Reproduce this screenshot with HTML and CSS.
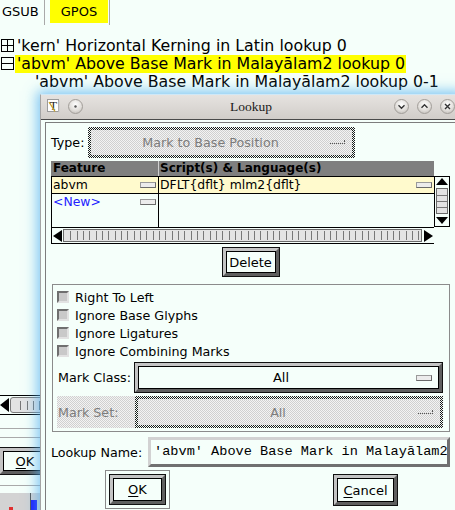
FILE: index.html
```html
<!DOCTYPE html>
<html>
<head>
<meta charset="utf-8">
<link rel="stylesheet" href="styles.css">
</head>
<body>
<div class="app">
  <div class="tabs">
    <div class="tab tab-first">GSUB</div>
    <div class="tab tab-sel"><span class="tab-hl">GPOS</span></div>
  </div>
  <div class="tree">
    <div class="trow"><span class="tog"><i class="h"></i><i class="v"></i></span><span class="tlabel">'kern' Horizontal Kerning in Latin lookup 0</span></div>
    <div class="trow"><span class="tog"><i class="h"></i></span><span class="tlabel hl">'abvm' Above Base Mark in Malayālam2 lookup 0</span></div>
    <div class="trow sub"><span class="tlabel">'abvm' Above Base Mark in Malayālam2 lookup 0-1</span></div>
  </div>
  <div class="lower">
    <div class="bg-scroll"><span class="bg-arrow"></span><span class="bg-track"></span></div>
    <div class="bg-line l1"></div>
    <div class="bg-line l2"></div>
    <div class="bg-okrow"><span class="btn bg-ok"><u>O</u>K</span></div>
    <div class="bg-line l3"></div>
    <div class="bg-band"><i class="red"></i><i class="vl"></i><i class="blue"></i></div>
  </div>
</div>

<div class="dlg">
  <div class="titlebar">
    <div class="tb-left">
      <svg class="appicon" width="13" height="14" viewBox="0 0 13 14"><rect x="0.5" y="0.5" width="11" height="12" fill="#fff" stroke="#9a9a9a"/><line x1="12" y1="13.5" x2="12" y2="1.5" stroke="#c8c8c8"/><text x="6.5" y="10.5" font-family="Liberation Serif, serif" font-size="12" text-anchor="middle" fill="#222">T</text><line x1="2" y1="3" x2="8" y2="12.5" stroke="#c9a227" stroke-width="1.3"/></svg>
      <span class="circ"><svg width="9" height="9" viewBox="0 0 9 9"><circle cx="4.5" cy="4.5" r="1.2" fill="#555"/></svg></span>
    </div>
    <div class="tb-title">Lookup</div>
    <div class="tb-right">
      <span class="circ"><svg width="9" height="9" viewBox="0 0 9 9"><path d="M1.5 3.2l3 3 3-3" fill="none" stroke="#333" stroke-width="1.4"/></svg></span>
      <span class="circ"><svg width="9" height="9" viewBox="0 0 9 9"><path d="M1.5 5.8l3-3 3 3" fill="none" stroke="#333" stroke-width="1.4"/></svg></span>
      <span class="circ"><svg width="9" height="9" viewBox="0 0 9 9"><path d="M2 2l5 5M7 2l-5 5" fill="none" stroke="#333" stroke-width="1.4"/></svg></span>
    </div>
  </div>

  <div class="frame">
    <div class="typerow">
      <span class="lbl type-lbl">Type:</span>
      <div class="dis type-btn"><div class="dis-in"><span class="dis-text">Mark to Base Position</span><i class="dmenu"></i></div></div>
    </div>

    <div class="tbl">
      <div class="thead"><span class="h1">Feature</span><span class="h2">Script(s) &amp; Language(s)</span></div>
      <div class="tbody">
        <div class="trw r1"><span class="c1">abvm<i class="mb"></i></span><span class="c2">DFLT{dflt} mlm2{dflt}<i class="mb"></i></span></div>
        <div class="trw r2"><span class="c1 new">&lt;New&gt;<i class="mb"></i></span><span class="c2"></span></div>
        <div class="trw rfill"><span class="c1"></span><span class="c2"></span></div>
      </div>
      <div class="vscroll">
        <span class="ar-up"></span>
        <span class="vthumb"><i></i><i></i><i></i></span>
        <span class="ar-dn"></span>
      </div>
      <div class="hscroll">
        <span class="ar-l"></span>
        <span class="htrack"></span>
        <span class="ar-r"></span>
      </div>
    </div>

    <div class="del-row"><span class="btn del">Delete</span></div>

    <div class="group">
      <div class="chk"><span class="cb"></span><span class="lbl">Right To Left</span></div>
      <div class="chk"><span class="cb"></span><span class="lbl">Ignore Base Glyphs</span></div>
      <div class="chk"><span class="cb"></span><span class="lbl">Ignore Ligatures</span></div>
      <div class="chk"><span class="cb"></span><span class="lbl">Ignore Combining Marks</span></div>
      <div class="mc-row">
        <span class="lbl mc-lbl">Mark Class:</span>
        <span class="btn mc-btn"><span class="btn-text">All</span><i class="mb"></i></span>
      </div>
      <div class="ms-row">
        <span class="lbl ms-lbl">Mark Set:</span>
        <div class="dis ms-btn"><div class="dis-in"><span class="dis-text">All</span><i class="dmenu"></i></div></div>
      </div>
    </div>

    <div class="name-row">
      <span class="lbl name-lbl">Lookup Name:</span>
      <div class="field">'abvm' Above Base Mark in Malayālam2</div>
    </div>

    <div class="btn-row">
      <div class="defring"><span class="btn okb"><u>O</u>K</span></div>
      <span class="btn cancel"><u>C</u>ancel</span>
    </div>
  </div>
</div>
</body>
</html>
```

FILE: styles.css
```css
* { box-sizing: border-box; }
html, body { margin: 0; padding: 0; }
body {
  width: 455px;
  height: 510px;
  overflow: hidden;
  position: relative;
  background: #f5fffa;
  font-family: "DejaVu Sans", "Noto Sans", sans-serif;
  color: #000;
}
i { display: block; font-style: normal; }

/* ---------- background window ---------- */
.tabs { display: flex; height: 25px; font-size: 13px; line-height: 24px; }
.tab { border-right: 1px solid #a9a9a9; }
.tab-first { width: 45px; padding-left: 2px; }
.tab-sel { width: 65px; padding-left: 5px; }
.tab-hl { display: block; width: 58px; height: 23px; background: #ffff00; text-align: center; }

.tree { margin-top: 12px; font-size: 15.8px; line-height: 18px; }
.trow { display: flex; align-items: flex-start; height: 18px; white-space: nowrap; }
.tog {
  display: grid; place-items: center;
  width: 13px; height: 13px; margin: 2px 0 0 1px;
  border: 1px solid #000;
}
.tog .h { grid-area: 1 / 1; width: 100%; height: 1px; background: #000; }
.tog .v { grid-area: 1 / 1; width: 1px; height: 100%; background: #000; }
.tlabel { margin-left: 1px; padding: 0 1px 0 2px; }
.tlabel.hl { background: #ffff00; }
.trow.sub { padding-left: 32px; }

.lower { margin-top: 304px; }
.bg-scroll {
  height: 20px; display: flex; align-items: center;
  border-top: 1px solid #000; border-bottom: 1px solid #000;
}
.bg-arrow {
  width: 0; height: 0;
  border-top: 7px solid transparent; border-bottom: 7px solid transparent;
  border-right: 9px solid #000;
}
.bg-track {
  margin-left: 1px; width: 400px; height: 16px;
  border: 1px solid #7a7a7a; border-radius: 3px 0 0 3px;
  background: repeating-linear-gradient(90deg, transparent 0 5.33px, #777 5.33px 6.33px) 4px 3px / 100% 9px no-repeat, #e3e3e3;
}
.bg-line { height: 1px; background: #a9a9a9; }
.l1 { margin-top: 13px; }
.l2 { margin-top: 8px; }
.bg-okrow { margin-top: 10px; height: 26px; display: flex; }
.bg-ok { width: 50px; height: 26px; margin-left: 0; }
.l3 { margin-top: 11px; }
.bg-band { margin-top: 7px; height: 17px; background: #d3d3d3; display: flex; align-items: flex-end; }
.bg-band .red { width: 4px; height: 3px; background: #e03030; margin-left: 9px; }
.bg-band .vl { width: 1px; height: 17px; background: #555; margin-left: 17px; }
.bg-band .blue { width: 6px; height: 10px; background: #1a1aff; margin-left: 0; }

/* ---------- buttons ---------- */
.btn {
  display: flex; align-items: center; justify-content: center;
  border: 3px solid;
  border-color: #c4c4c4 #5f5f5f #5f5f5f #c4c4c4;
  box-shadow: 0 0 0 1px #111, inset 0 0 0 1px #000;
  background: #f5fffa;
  font-size: 13px;
  white-space: nowrap;
}
.btn u { text-decoration: underline; text-underline-offset: 2px; }
.mb {
  width: 16px; height: 6px;
  border: 1px solid; border-color: #9a9a9a #6a6a6a #6a6a6a #9a9a9a;
  background: #ececec;
}

/* ---------- dialog ---------- */
.dlg {
  position: absolute; left: 40px; top: 94px;
  width: 421px; height: 430px;
  background: #f5fffa;
  border-left: 1px solid #a4a4a4;
  border-top: 1px solid #cfe8f7;
  box-shadow: 0 0 12px 3px rgba(80, 175, 240, 0.72);
}
.titlebar {
  height: 25px; padding-bottom: 2px;
  display: grid; grid-template-columns: 1fr auto 1fr; align-items: center;
  background: linear-gradient(#e6e3e0, #d1cdc9);
  border-bottom: 1px solid #4a4a4a;
}
.tb-left { display: flex; align-items: center; padding-left: 6px; }
.appicon { display: block; }
.tb-left .circ { margin-left: 8px; }
.tb-title { font-family: "Liberation Serif", serif; font-size: 13.5px; color: #1a1a1a; padding-top: 1px; }
.tb-right { display: flex; justify-content: flex-end; gap: 8px; padding-right: 6px; }
.circ {
  width: 15px; height: 15px; border-radius: 50%;
  display: grid; place-items: center;
  border: 1px solid #a29e99;
  background: radial-gradient(circle at 50% 35%, #ffffff 0, #e2dfdb 55%, #b9b5b0 100%);
}
.circ svg { display: block; }

.frame {
  margin: 2px 0 0 4px;
  border: 1px solid #7d7d7d;
  padding: 4px 0 0 5px;
  height: 410px;
}
.lbl { font-size: 12.7px; white-space: nowrap; }

.typerow { display: flex; align-items: center; height: 31px; }
.type-lbl { width: 37px; }
.type-btn { width: 267px; height: 31px; }

.dis {
  padding: 3px;
  background: repeating-conic-gradient(#1a1a1a 0 25%, #f5fffa 0 50%) 0 0 / 2px 2px;
}
.dis-in {
  height: 100%; display: flex; align-items: center;
  background: repeating-conic-gradient(#d0d0d0 0 25%, #f3f3f3 0 50%) 0 0 / 2px 2px;
  color: #7c7c7c; font-size: 12.7px;
}
.dis-text { flex: 1; text-align: center; }
.dmenu {
  width: 15px; height: 4px; margin-right: 7px; margin-bottom: 1px;
  border-bottom: 1px dotted #555; border-right: 1px dotted #555;
}

/* table */
.tbl {
  margin-top: 3px; width: 399px;
  display: grid; grid-template-columns: 383px 16px; grid-template-rows: 16px 50px 17px;
}
.thead {
  grid-column: 1; grid-row: 1;
  display: flex; background: #7f7f7f; border-bottom: 1px solid #000;
  font-weight: bold; font-size: 12px; line-height: 15px; white-space: nowrap;
}
.h1 { width: 108px; padding-left: 2px; border-right: 1px solid #cfcfcf; }
.h2 { padding-left: 1px; }
.tbody {
  grid-column: 1; grid-row: 2;
  display: flex; flex-direction: column;
  border-left: 1px solid #000;
  font-size: 12.4px; line-height: 16px;
}
.trw { display: flex; height: 16px; }
.trw.r1 { height: 17px; background: #fffacd; border-bottom: 1px solid #000; }
.trw.rfill { flex: 1; }
.c1 {
  width: 107px; border-right: 1px solid #000; padding-left: 1px;
  display: flex; align-items: center; justify-content: space-between; padding-right: 2px;
}
.c2 {
  flex: 1; padding-left: 1px; padding-right: 2px;
  display: flex; align-items: center; justify-content: space-between; white-space: nowrap;
}
.c1.new { color: #2222ff; }
.vscroll {
  grid-column: 2; grid-row: 2;
  margin-top: -1px; height: 51px;
  border: 1px solid #000;
  display: flex; flex-direction: column; align-items: center;
  padding-top: 1px;
}
.ar-up { width: 0; height: 0; border-left: 6px solid transparent; border-right: 6px solid transparent; border-bottom: 7px solid #000; }
.ar-dn { width: 0; height: 0; border-left: 6px solid transparent; border-right: 6px solid transparent; border-top: 7px solid #000; margin-top: 3px; }
.vthumb {
  margin-top: 3px; width: 12px; height: 26px;
  border: 1px solid #6a6a6a; background: #e3e3e3;
  display: flex; flex-direction: column; align-items: center; justify-content: center; gap: 5px;
}
.vthumb i { width: 10px; height: 1px; background: #777; }
.hscroll {
  grid-column: 1; grid-row: 3;
  display: flex; align-items: center;
  border-top: 1px solid #000; border-bottom: 1px solid #000; border-left: 1px solid #000;
}
.ar-l { margin-left: 1px; width: 0; height: 0; border-top: 6px solid transparent; border-bottom: 6px solid transparent; border-right: 9px solid #000; }
.ar-r { margin-left: 2px; width: 0; height: 0; border-top: 6px solid transparent; border-bottom: 6px solid transparent; border-left: 9px solid #000; }
.htrack {
  margin-left: 1px; width: 359px; height: 13px;
  border: 1px solid #6a6a6a;
  background: repeating-linear-gradient(90deg, transparent 0 5.33px, #777 5.33px 6.33px) 1px 1px / 100% 9px no-repeat, #e3e3e3;
}

.del-row { margin-top: 4px; width: 399px; display: flex; justify-content: center; }
.del { width: 56px; height: 28px; }

/* group */
.group {
  margin: 8px 0 0 1px; width: 398px;
  border: 1px solid #8b8b8b;
  padding: 3px 0 3px 4px;
}
.chk { display: flex; align-items: center; height: 18px; }
.cb {
  width: 12px; height: 12px; margin-right: 6px;
  border: 2px solid; border-color: #6f6f6f #e2e2e2 #e2e2e2 #6f6f6f;
  background: #c9c9c9;
}
.mc-row { margin-top: 2px; height: 31px; display: flex; align-items: center; }
.mc-lbl { width: 78px; padding-left: 1px; }
.mc-btn { width: 307px; height: 29px; }
.btn-text { flex: 1; text-align: center; padding-left: 8px; }
.mc-btn .mb { margin-right: 7px; }
.ms-row { margin-top: 3px; height: 32px; display: flex; }
.ms-lbl {
  width: 78px; padding-left: 1px; display: flex; align-items: center; color: #7c7c7c;
  background: repeating-conic-gradient(#d0d0d0 0 25%, #f3f3f3 0 50%) 0 0 / 2px 2px;
}
.ms-btn { width: 308px; height: 32px; }

/* name */
.name-row { margin-top: 5px; height: 30px; display: flex; align-items: center; }
.name-lbl { width: 97px; }
.field {
  width: 302px; height: 30px;
  border: 3px solid; border-color: #d2d2d2 #707070 #707070 #d2d2d2;
  padding-left: 3px;
  font-family: "Liberation Mono", monospace; font-size: 13.6px; line-height: 24px;
  white-space: nowrap; overflow: hidden;
}

/* ok / cancel */
.btn-row { margin-top: 3px; display: flex; align-items: flex-start; }
.defring {
  margin-left: 54px; width: 65px; height: 39px;
  border: 1px solid #8a8a8a; padding: 4px;
}
.okb { width: 55px; height: 29px; }
.cancel { margin: 5px 0 0 164px; width: 63px; height: 30px; }
```
